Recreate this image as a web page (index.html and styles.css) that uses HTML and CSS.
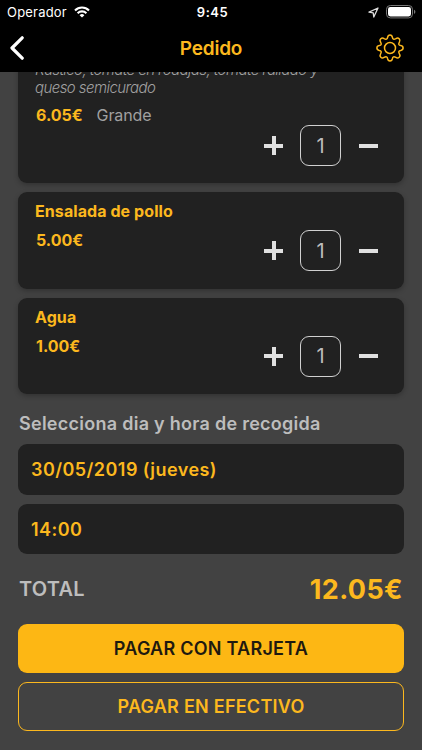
FILE: index.html
```html
<!DOCTYPE html>
<html lang="es">
<head>
    <meta charset="UTF-8">
    <meta name="viewport" content="width=device-width, initial-scale=1.0">
    <title>Pedido</title>
    <link rel="stylesheet" href="styles.css">
</head>
<body>
    <div class="app">
        <header class="header">
            <div class="status-bar">
                <div class="status-left">
                    <span class="carrier">Operador</span>
                    <svg class="wifi" width="16" height="12" viewBox="0 0 16 12" fill="none" stroke="#fff" stroke-width="2.1">
                        <path d="M1 4.4a10 10 0 0 1 14 0M3.6 7.2a6.3 6.3 0 0 1 8.8 0"/>
                        <path d="M5.6 9.2a3.5 3.5 0 0 1 4.8 0L8 11.6z" fill="#fff" stroke="none"/>
                    </svg>
                </div>
                <span class="clock">9:45</span>
                <div class="status-right">
                    <svg width="11" height="11" viewBox="0 0 11 11" fill="none" stroke="#ddd" stroke-width="1.3" stroke-linejoin="round">
                        <path d="M10 1 1 5.2l4.2.6.6 4.2z"/>
                    </svg>
                    <svg width="30" height="14" viewBox="0 0 30 14">
                        <rect x=".5" y=".5" width="26" height="12.4" rx="3.8" fill="none" stroke="#777"/>
                        <rect x="2" y="2" width="23" height="9.4" rx="2.3" fill="#fff"/>
                        <path d="M28 4.7c1.9.7 1.9 3.5 0 4.2z" fill="#777"/>
                    </svg>
                </div>
            </div>
            <nav class="nav-bar">
                <svg class="back" width="14" height="24" viewBox="0 0 14 24" fill="none" stroke="#fff" stroke-width="3.2" stroke-linecap="round" stroke-linejoin="round">
                    <path d="M12.2 1.8 2 12l10.2 10.2"/>
                </svg>
                <h1 class="title">Pedido</h1>
                <svg class="gear" width="28" height="28" viewBox="0 0 28 28" fill="none" stroke="#fcb81e" stroke-width="1.5" stroke-linejoin="round">
                    <circle cx="14" cy="14" r="5.5"/>
                    <path d="M11.6 3.3Q12 .9 14 .9T16.4 3.3Q16.8 6.3 19.9 4.6Q21.8 3.3 23.2 4.8T23.4 8.1Q21.7 11.2 24.7 11.6Q27.1 12 27.1 14T24.7 16.4Q21.7 16.8 23.4 19.9Q24.7 21.8 23.2 23.2T19.9 23.4Q16.8 21.7 16.4 24.7Q16 27.1 14 27.1T11.6 24.7Q11.2 21.7 8.1 23.4Q6.2 24.7 4.8 23.2T4.6 19.9Q6.3 16.8 3.3 16.4Q.9 16 .9 14T3.3 11.6Q6.3 11.2 4.6 8.1Q3.3 6.2 4.8 4.8T8.1 4.6Q11.2 6.3 11.6 3.3z"/>
                </svg>
            </nav>
        </header>

        <main class="content">
            <section class="card card-long">
                <p class="description">Rústico, tomate en rodajas, tomate rallado y<br>queso semicurado</p>
                <p class="price">6.05€ <span class="size">Grande</span></p>
                <div class="stepper">
                    <button class="plus" aria-label="Añadir"></button>
                    <span class="quantity">1</span>
                    <button class="minus" aria-label="Quitar"></button>
                </div>
            </section>
            <section class="card">
                <div>
                    <h2 class="name">Ensalada de pollo</h2>
                    <p class="price">5.00€</p>
                </div>
                <div class="stepper">
                    <button class="plus" aria-label="Añadir"></button>
                    <span class="quantity">1</span>
                    <button class="minus" aria-label="Quitar"></button>
                </div>
            </section>
            <section class="card">
                <div>
                    <h2 class="name">Agua</h2>
                    <p class="price">1.00€</p>
                </div>
                <div class="stepper">
                    <button class="plus" aria-label="Añadir"></button>
                    <span class="quantity">1</span>
                    <button class="minus" aria-label="Quitar"></button>
                </div>
            </section>

            <h3 class="pickup-title">Selecciona dia y hora de recogida</h3>
            <div class="field">30/05/2019 (jueves)</div>
            <div class="field">14:00</div>

            <div class="total">
                <span class="total-label">TOTAL</span>
                <span class="total-price">12.05€</span>
            </div>

            <button class="btn btn-card">PAGAR CON TARJETA</button>
            <button class="btn btn-cash">PAGAR EN EFECTIVO</button>
        </main>
    </div>
</body>
</html>
```
FILE: styles.css
```css
* {
    margin: 0;
    padding: 0;
    box-sizing: border-box;
}

body {
    font-family: 'Inter', sans-serif;
    background: #424242;
    color: #bdbdbd;
}

button {
    font-family: inherit;
    border: none;
    background: none;
    cursor: pointer;
}

.app {
    height: 750px;
    display: flex;
    flex-direction: column;
    overflow: hidden;
}

.header {
    height: 72px;
    flex-shrink: 0;
    background: #000;
    color: #fff;
}

.status-bar {
    height: 24px;
    padding: 0 6px 0 7px;
    display: grid;
    grid-template-columns: 1fr auto 1fr;
    align-items: center;
}

.status-left,
.status-right {
    display: flex;
    align-items: center;
    gap: 7px;
}

.status-right {
    justify-content: flex-end;
}

.carrier {
    font-size: 13px;
    letter-spacing: 0.2px;
}

.clock {
    padding-left: 2px;
    font-size: 13px;
    font-weight: 600;
    letter-spacing: 0.5px;
}

.nav-bar {
    height: 48px;
    padding: 0 18px 0 10px;
    display: grid;
    grid-template-columns: 1fr auto 1fr;
    align-items: center;
}

.title {
    padding-left: 8px;
    font-size: 19px;
    font-weight: 600;
    letter-spacing: -0.2px;
    color: #fcb81e;
}

.gear {
    justify-self: end;
}

/* list is scrolled to the end, so the first card runs under the header */
.content {
    flex: 1;
    min-height: 0;
    padding: 0 18px 18.6px;
    display: flex;
    flex-direction: column;
    justify-content: flex-end;
    overflow: hidden;
}

.card {
    height: 96.5px;
    flex-shrink: 0;
    margin-bottom: 9px;
    padding: 10px 26px 17.5px 17px;
    display: flex;
    justify-content: space-between;
    background: #212121;
    border-radius: 9px;
    box-shadow: 0 2px 5px rgba(0, 0, 0, 0.25);
}

.card-long {
    height: 140px;
    padding-bottom: 17px;
    display: grid;
    grid-template-columns: 100%;
    grid-template-rows: 1fr 18px 42px;
}

.description {
    align-self: end;
    margin-bottom: 9px;
    font-size: 15px;
    font-style: italic;
    font-weight: 300;
    line-height: 18px;
    letter-spacing: -0.57px;
    color: #a0a0a0;
    white-space: nowrap;
}

.name {
    font-size: 16px;
    font-weight: 700;
    line-height: 18px;
    letter-spacing: 0.08px;
    color: #fcb81e;
}

.price {
    padding-left: 1px;
    font-size: 16px;
    font-weight: 700;
    line-height: 18px;
    color: #fcb81e;
}

.name + .price {
    margin-top: 11px;
}

.size {
    margin-left: 10px;
    font-weight: 400;
    letter-spacing: -0.1px;
    color: #a0a0a0;
}

.stepper {
    align-self: flex-end;
    justify-self: end;
    display: flex;
    align-items: center;
}

.quantity {
    width: 41px;
    height: 41px;
    margin: 0 18px 0 17px;
    display: flex;
    align-items: center;
    justify-content: center;
    border: 1px solid #d0d0d0;
    border-radius: 9px;
    font-size: 20px;
}

.plus,
.minus {
    width: 19px;
    height: 19px;
    background: linear-gradient(#e0e0e0, #e0e0e0) center / 19px 4px no-repeat;
}

.plus {
    background:
        linear-gradient(#e0e0e0, #e0e0e0) center / 19px 4px no-repeat,
        linear-gradient(#e0e0e0, #e0e0e0) center / 4px 19px no-repeat;
}

.pickup-title {
    margin: 10px 0 9px 1px;
    font-size: 18px;
    font-weight: 600;
    line-height: 22px;
    letter-spacing: 0.27px;
    white-space: nowrap;
}

.field {
    height: 50.5px;
    flex-shrink: 0;
    margin-bottom: 9px;
    padding-left: 13px;
    display: flex;
    align-items: center;
    background: #212121;
    border-radius: 9px;
    font-size: 18px;
    font-weight: 600;
    letter-spacing: 0.45px;
    color: #fcb81e;
}

.total {
    height: 52px;
    flex-shrink: 0;
    margin-bottom: 9px;
    padding: 0 1px;
    display: flex;
    align-items: center;
    justify-content: space-between;
}

.total-label {
    font-size: 20px;
    font-weight: 600;
    letter-spacing: 0.25px;
}

.total-price {
    font-size: 27px;
    font-weight: 700;
    letter-spacing: 0.4px;
    color: #fcb81e;
}

.btn {
    height: 49px;
    flex-shrink: 0;
    border-radius: 9px;
    font-size: 18px;
    font-weight: 600;
    letter-spacing: 0.25px;
}

.btn-card {
    margin-bottom: 9px;
    background: #fdb714;
    color: #1f1a10;
}

.btn-cash {
    border: 1px solid #fcb81e;
    color: #fcb81e;
}
```
